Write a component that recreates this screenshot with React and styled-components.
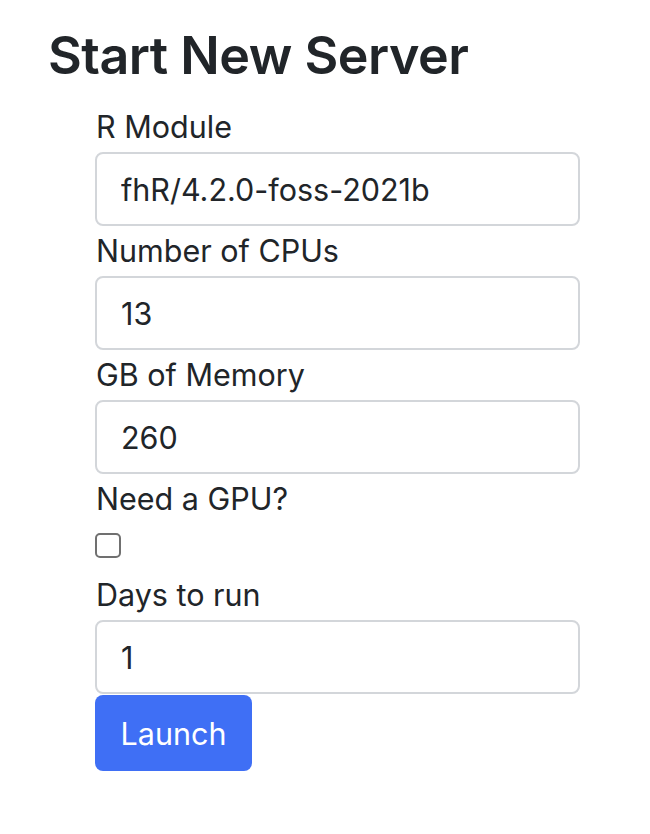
import React, { useState } from 'react';
import styled, { createGlobalStyle } from 'styled-components';

const GlobalStyle = createGlobalStyle`
  body {
    margin: 0;
    background: #ffffff;
    color: #212529;
    font-family: Inter, "Liberation Sans", sans-serif;
  }
`

const Page = styled.div`
  display: flex;
  flex-direction: column;
  padding: 25px 0 0 48px;
`

const Heading = styled.h2`
  margin: 0;
  font-size: 52px;
  font-weight: 600;
  line-height: 62px;
  letter-spacing: -0.5px;
`

const Form = styled.form`
  display: flex;
  flex-direction: column;
  width: 485px;
  margin: 15px 0 0 47px;
`

const Label = styled.label`
  display: block;
  font-size: 30.5px;
  line-height: 50px;
  padding-left: 1px;
`

const Input = styled.input`
  box-sizing: border-box;
  width: 100%;
  height: 74px;
  padding: 0 24px;
  border: 2px solid #d3d6da;
  border-radius: 8px;
  font-family: inherit;
  font-size: 30.5px;
  color: #212529;
  background: #fff;
  outline: none;
`

const CheckRow = styled.div`
  display: flex;
  align-items: flex-start;
  box-sizing: border-box;
  height: 46px;
  padding-top: 9px;
`

const Check = styled.input`
  appearance: none;
  box-sizing: border-box;
  width: 26px;
  height: 25px;
  margin: 0;
  border: 2px solid #707070;
  border-radius: 5px;
  background: #fff;
`

const Button = styled.button`
  align-self: flex-start;
  box-sizing: border-box;
  width: 157px;
  height: 76px;
  margin-top: 1px;
  padding: 0;
  border: none;
  border-radius: 8px;
  background: #3f6ff5;
  color: #fff;
  font-family: inherit;
  font-size: 30.5px;
  cursor: pointer;
`

const fields = [
  { key: 'module', label: 'R Module' },
  { key: 'cpus', label: 'Number of CPUs' },
  { key: 'mem', label: 'GB of Memory' },
]

function App() {
  const [values, setValues] = useState({ module: 'fhR/4.2.0-foss-2021b', cpus: '13', mem: '260', days: '1' })
  const [gpu, setGpu] = useState(false)

  const update = key => e => setValues({ ...values, [key]: e.target.value })

  return (
    <Page>
      <GlobalStyle />
      <Heading>Start New Server</Heading>
      <Form onSubmit={e => e.preventDefault()}>
        {fields.map(f => (
          <React.Fragment key={f.key}>
            <Label htmlFor={f.key}>{f.label}</Label>
            <Input id={f.key} value={values[f.key]} onChange={update(f.key)} />
          </React.Fragment>
        ))}
        <Label htmlFor="gpu">Need a GPU?</Label>
        <CheckRow>
          <Check id="gpu" type="checkbox" checked={gpu} onChange={e => setGpu(e.target.checked)} />
        </CheckRow>
        <Label htmlFor="days">Days to run</Label>
        <Input id="days" value={values.days} onChange={update('days')} />
        <Button type="submit">Launch</Button>
      </Form>
    </Page>
  );
}

export default App;
